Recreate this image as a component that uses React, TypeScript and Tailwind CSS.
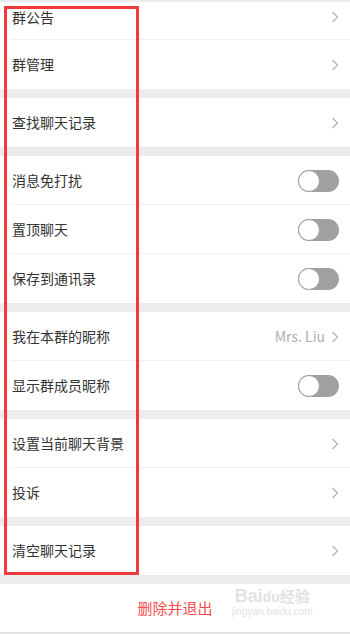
import React from 'react';

type Row = {
  label: string;
  kind: 'link' | 'toggle';
  value?: string;
};

const groups: Row[][] = [
  [{ label: '查找聊天记录', kind: 'link' }],
  [
    { label: '消息免打扰', kind: 'toggle' },
    { label: '置顶聊天', kind: 'toggle' },
    { label: '保存到通讯录', kind: 'toggle' },
  ],
  [
    { label: '我在本群的昵称', kind: 'link', value: 'Mrs. Liu' },
    { label: '显示群成员昵称', kind: 'toggle' },
  ],
  [
    { label: '设置当前聊天背景', kind: 'link' },
    { label: '投诉', kind: 'link' },
  ],
  [{ label: '清空聊天记录', kind: 'link' }],
];

function Chevron(): React.ReactElement {
  return (
    <svg width="8" height="12" viewBox="0 0 8 12" className="shrink-0">
      <path d="M1.5 1 L6.5 6 L1.5 11" fill="none" stroke="#b2b2b2" strokeWidth="1.2" />
    </svg>
  );
}

function Toggle(): React.ReactElement {
  return (
    <div className="relative h-[22px] w-[41px] rounded-full bg-[#a0a0a0]">
      <div className="absolute left-0 top-0 h-[22px] w-[22px] rounded-full border border-[#a0a0a0] bg-white" />
    </div>
  );
}

function SettingRow({ row, last }: { row: Row; last: boolean }): React.ReactElement {
  return (
    <div className="relative flex h-[49px] items-center justify-between bg-white pl-3 pr-[11px]">
      <span className="text-[14px] text-[#333]">{row.label}</span>
      {row.kind === 'toggle' ? (
        <Toggle />
      ) : (
        <div className="flex items-center gap-[6px]">
          {row.value ? <span className="text-[14px] text-[#b0b0b0]">{row.value}</span> : null}
          <Chevron />
        </div>
      )}
      {!last ? <div className="absolute bottom-0 left-[11px] right-0 h-px bg-[#f0f0f0]" /> : null}
    </div>
  );
}

export default function App(): React.ReactElement {
  return (
    <div
      className="relative h-[634px] w-[350px] overflow-hidden bg-[#ececec]"
      style={{ fontFamily: '"Noto Sans CJK SC", "Noto Sans", sans-serif' }}
    >
      <div className="h-[2px]" />
      {/* first group, scrolled partly out of view */}
      <div className="flex flex-col">
        <div className="relative flex h-[38px] items-center justify-between bg-white pb-[8px] pl-3 pr-[11px]">
          <span className="text-[14px] text-[#333]">群公告</span>
          <Chevron />
          <div className="absolute bottom-0 left-[11px] right-0 h-px bg-[#f0f0f0]" />
        </div>
        <SettingRow row={{ label: '群管理', kind: 'link' }} last />
      </div>
      <div className="mt-[9px] flex flex-col gap-[9px]">
        {groups.map((group, gi) => (
          <div key={gi} className="flex flex-col">
            {group.map((row, ri) => (
              <SettingRow key={row.label} row={row} last={ri === group.length - 1} />
            ))}
          </div>
        ))}
        <div className="flex h-[49px] items-center justify-center border-b border-[#e0e0e0] bg-white">
          <span className="text-[15px] text-[#f54b4b]">删除并退出</span>
        </div>
      </div>

      {/* annotation box */}
      <div className="pointer-events-none absolute left-[4px] top-[6px] h-[569px] w-[135px] border-[3px] border-[#f33a3a]" />

      {/* watermark */}
      <div className="pointer-events-none absolute left-[232px] top-[587px] flex flex-col items-center leading-none text-[#e2e2e2]">
        <span className="text-[18px] font-bold" style={{ fontFamily: '"Liberation Sans", sans-serif' }}>
          Bai<span className="text-[14px]">du</span>
          <span className="text-[15px]" style={{ fontFamily: '"Noto Sans CJK SC", sans-serif' }}>经验</span>
        </span>
        <span className="mt-[2px] text-[10px]" style={{ fontFamily: '"Liberation Sans", sans-serif' }}>
          jingyan.baidu.com
        </span>
      </div>
    </div>
  );
}
